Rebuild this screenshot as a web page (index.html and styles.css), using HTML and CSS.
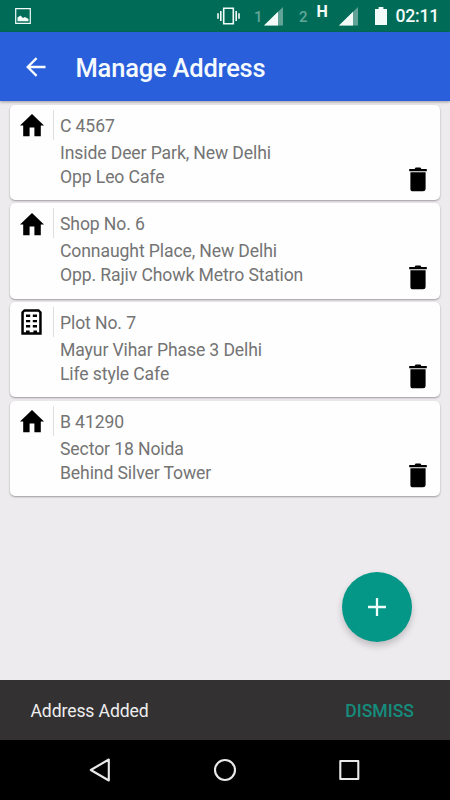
FILE: index.html
```html
<!DOCTYPE html>
<html lang="en">
<head>
<meta charset="utf-8">
<title>Manage Address</title>
<link rel="stylesheet" href="styles.css">
</head>
<body>
<svg class="defs" aria-hidden="true">
  <symbol id="home" viewBox="0 0 24 23"><path d="M12 0L24 11.4H20.8V22.2H14.4V13.4H9.6V22.2H3.2V11.4H0Z"/></symbol>
  <symbol id="trash" viewBox="0 0 18 25"><path d="M.2 2H5.6L6.6.6H11.4L12.4 2H17.8V4.2H.2ZM1.4 5.3H16.6V22Q16.6 24.3 14 24.3H4Q1.4 24.3 1.4 22Z"/></symbol>
  <symbol id="building" viewBox="0 0 21 26"><path fill-rule="evenodd" d="M3 .3H18L20.7 3V25.7H.3V3ZM3.8 2.8L2.8 3.8V23.2H5V21.4H8.6V23.2H12.4V21.4H16V23.2H18.2V3.8L17.2 2.8Z"/><path d="M5 5.6h4.2V8H5zM11.8 5.6H16V8h-4.2zM5 10.9h4.2v2.4H5zM11.8 10.9H16v2.4h-4.2zM5 16.1h4.2v2.4H5zM11.8 16.1H16v2.4h-4.2z"/></symbol>
  <symbol id="signal" viewBox="0 0 19 19"><path d="M0 18.5L19 0V18.5Z" opacity=".4"/><path d="M0 18.5L14 4.8V18.5Z"/></symbol>
</svg>
<div class="screen">
  <div class="status">
    <svg class="picture" viewBox="0 0 16 16"><path fill="none" stroke="currentColor" stroke-width="1.2" d="M.7.7H15.3V15.3H.7Z"/><path d="M2.5 13.2V9.5L5.5 7.5L8 10L10 9L13.5 11V13.2Z"/></svg>
    <svg class="vibrate" viewBox="0 0 23 18"><path fill="none" stroke="currentColor" stroke-width="1.6" d="M6.7 1.2H16.3V16.8H6.7ZM3.8 4V14M1 6.3V11.7M19.2 4V14M22 6.3V11.7"/></svg>
    <span class="sim sim-one">1</span>
    <svg class="signal"><use href="#signal"/></svg>
    <span class="sim sim-two">2</span>
    <span class="network">H</span>
    <svg class="signal signal-two"><use href="#signal"/></svg>
    <svg class="battery" viewBox="0 0 12 18"><path d="M3.6 0H8.4V2H12V18H0V2H3.6Z"/></svg>
    <span class="time">02:11</span>
  </div>
  <header class="bar">
    <svg class="back" viewBox="0 0 20 20"><path fill="none" stroke="currentColor" stroke-width="2.3" d="M19.5 10H2M10.6 1.1L1.7 10L10.6 18.9"/></svg>
    <h1>Manage Address</h1>
  </header>
  <main>
    <article class="card">
      <svg class="home"><use href="#home"/></svg>
      <div class="text"><p class="first">C 4567</p><p>Inside Deer Park, New Delhi</p><p>Opp Leo Cafe</p></div>
      <svg class="trash"><use href="#trash"/></svg>
    </article>
    <article class="card">
      <svg class="home"><use href="#home"/></svg>
      <div class="text"><p class="first">Shop No. 6</p><p>Connaught Place, New Delhi</p><p>Opp. Rajiv Chowk Metro Station</p></div>
      <svg class="trash"><use href="#trash"/></svg>
    </article>
    <article class="card">
      <svg class="building"><use href="#building"/></svg>
      <div class="text"><p class="first">Plot No. 7</p><p>Mayur Vihar Phase 3 Delhi</p><p>Life style Cafe</p></div>
      <svg class="trash"><use href="#trash"/></svg>
    </article>
    <article class="card">
      <svg class="home"><use href="#home"/></svg>
      <div class="text"><p class="first">B 41290</p><p>Sector 18 Noida</p><p>Behind Silver Tower</p></div>
      <svg class="trash"><use href="#trash"/></svg>
    </article>
  </main>
  <div class="fab"><svg viewBox="0 0 18 18"><path fill="none" stroke="currentColor" stroke-width="2.3" d="M9 0V18M0 9H18"/></svg></div>
  <div class="snackbar"><span class="message">Address Added</span><span class="dismiss">DISMISS</span></div>
  <nav>
    <svg viewBox="0 0 24 24"><path d="M20.8 1.5V22.5L2.8 12Z"/></svg>
    <svg viewBox="0 0 24 24"><circle cx="12" cy="12" r="10"/></svg>
    <svg viewBox="0 0 24 24"><path d="M3.3 3H21.3V21H3.3Z"/></svg>
  </nav>
</div>
</body>
</html>
```
FILE: styles.css
```css
* { box-sizing: border-box; }
body, h1, p { margin: 0; }
body { font-family: Roboto, "Liberation Sans", sans-serif; }
svg { display: block; fill: currentColor; flex: none; }
.defs { position: absolute; width: 0; height: 0; }
.screen {
  position: relative;
  width: 450px;
  height: 800px;
  display: flex;
  flex-direction: column;
  background: #eeebef;
  overflow: hidden;
}
.status {
  height: 32px;
  flex: none;
  display: flex;
  align-items: center;
  padding-left: 15px;
  background: #006c58;
  color: #f2fbf8;
}
.picture { width: 16px; height: 16px; }
.vibrate { width: 23px; height: 18px; margin-left: 186px; }
.sim { color: #62a798; font-size: 15px; line-height: 18px; font-weight: 500; width: 10px; margin-top: 2px; }
.sim-one { margin-left: 14px; }
.sim-two { margin-left: 16px; }
.signal { width: 19px; height: 19px; }
.network { width: 12px; margin: -8px 0 0 7.5px; font-size: 16px; line-height: 18px; font-weight: 700; }
.signal-two { margin-left: 10.5px; }
.battery { width: 12px; height: 18px; margin-left: 16.5px; }
.time { margin-left: 9px; font-size: 17.6px; letter-spacing: -.25px; font-weight: 500; line-height: 20px; white-space: nowrap; }
.bar {
  height: 69px;
  flex: none;
  display: flex;
  align-items: center;
  padding: 1px 0 0 25.5px;
  background: #295fdb;
  color: #f5faff;
  box-shadow: 0 1px 3px rgba(0, 0, 0, .35);
}
.back { width: 20px; height: 20px; margin-top: -1px; }
h1 { margin: 1px 0 0 30px; font-size: 25.5px; letter-spacing: -.2px; font-weight: 500; line-height: 32px; }
main { flex: 1; padding: 3.5px 10.5px 0 10px; }
.card {
  height: 95.5px;
  margin-bottom: 3.2px;
  display: flex;
  align-items: flex-start;
  background: #fefefe;
  border-radius: 5px;
  box-shadow: 0 1px 2px rgba(0, 0, 0, .35);
  color: #000;
}
.home { width: 24px; height: 23px; margin: 9.5px 0 0 9.5px; }
.building { width: 21px; height: 26px; margin: 7.5px 1.5px 0 11px; }
.text { flex: 1; margin-left: 9px; padding-top: 5.2px; color: #747474; font-size: 17.6px; letter-spacing: -.11px; line-height: 24px; }
.first { height: 30px; line-height: 33px; padding-left: 6.5px; border-left: 1px solid #dedede; }
.text p:not(.first) { padding-left: 7.5px; }
.text p:nth-child(2) { margin-top: 1px; }
.trash { width: 18px; height: 25px; margin: 62.3px 12.5px 0 0; }
.fab {
  position: absolute;
  left: 342px;
  top: 572px;
  width: 70px;
  height: 70px;
  display: flex;
  align-items: center;
  justify-content: center;
  border-radius: 50%;
  background: #049787;
  color: #effffc;
  box-shadow: 0 4px 7px rgba(0, 0, 0, .2);
}
.fab svg { width: 18px; height: 18px; }
.snackbar {
  height: 60px;
  flex: none;
  display: flex;
  align-items: center;
  justify-content: space-between;
  padding: 2px 36px 0 30.5px;
  background: #333132;
  color: #eee;
  font-size: 17.6px;
}
.message { letter-spacing: -.11px; }
.dismiss { color: #158c7c; font-weight: 500; }
nav {
  height: 60px;
  flex: none;
  display: flex;
  justify-content: space-between;
  align-items: center;
  padding: 0 89px 0 88px;
  background: #000;
  color: #e9e9e9;
}
nav svg { width: 24px; height: 24px; fill: none; stroke: currentColor; stroke-width: 2.1; stroke-linejoin: round; }
```
